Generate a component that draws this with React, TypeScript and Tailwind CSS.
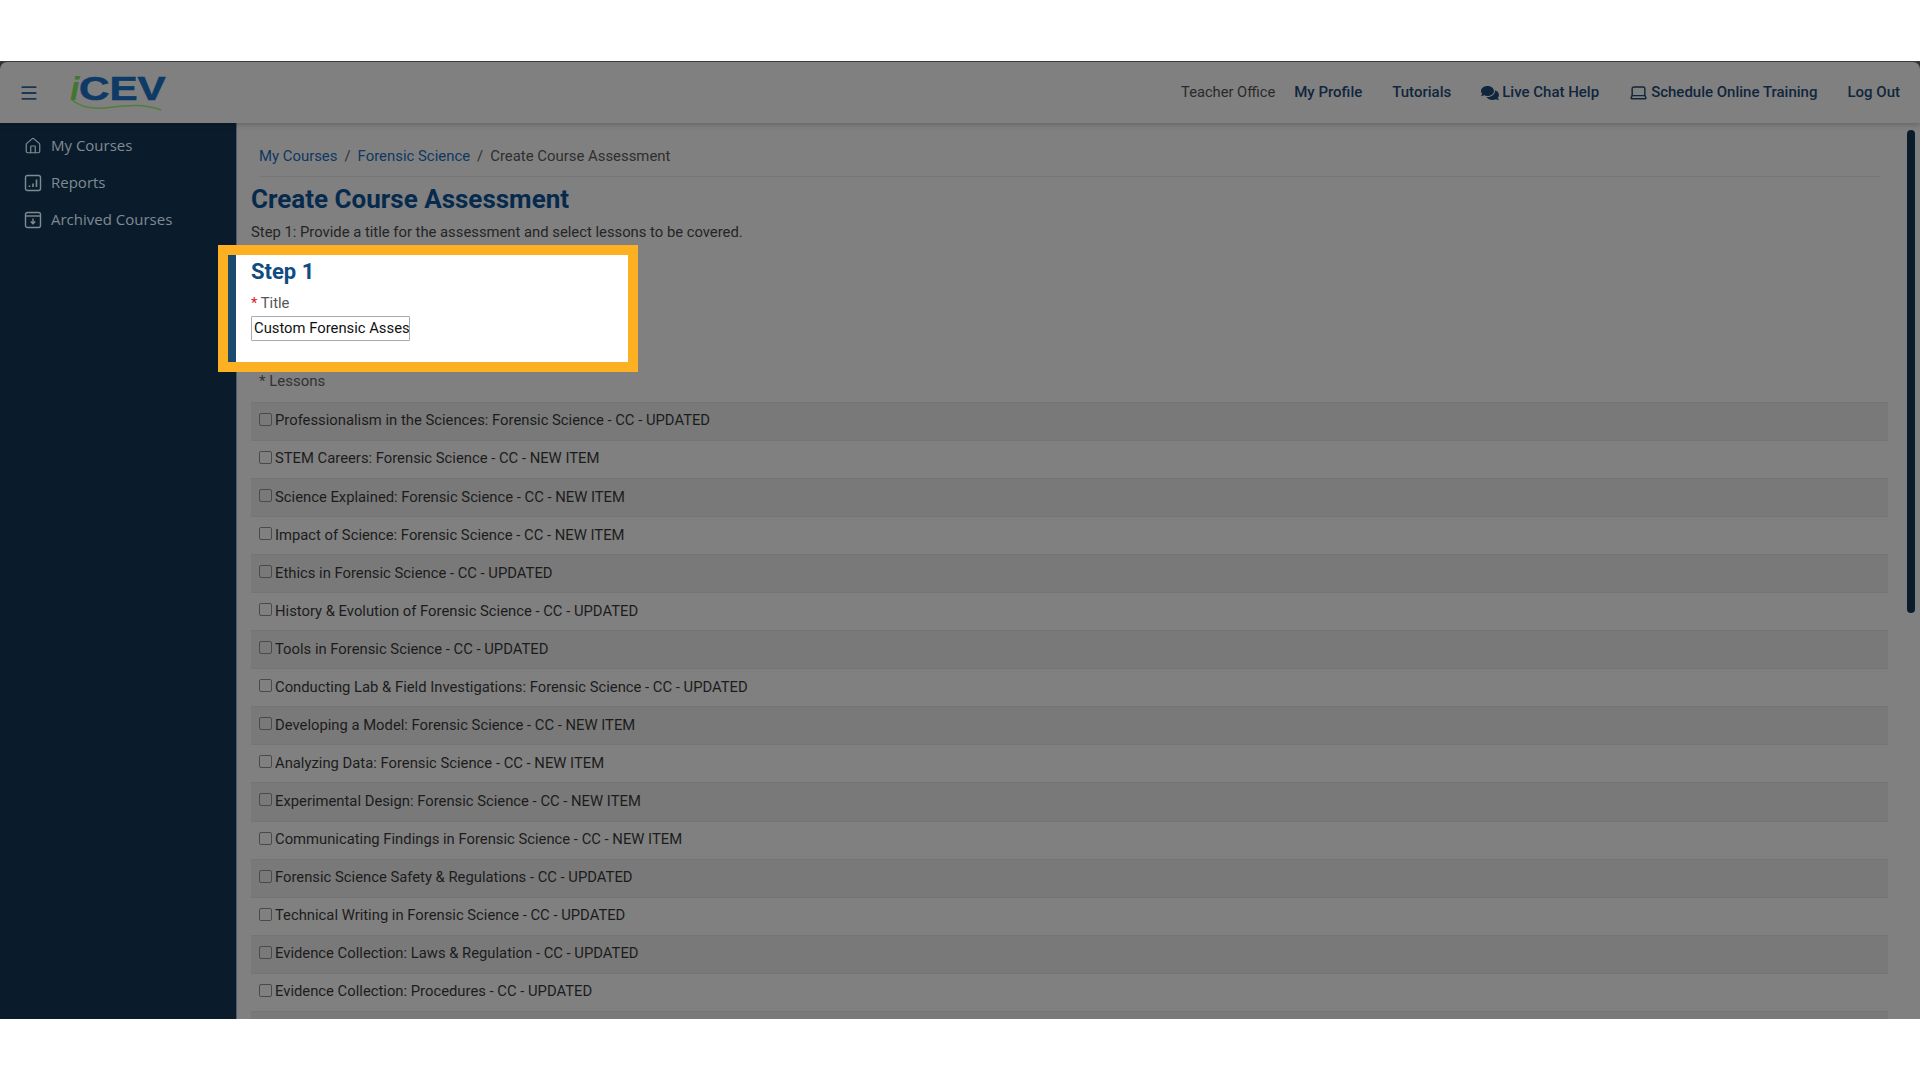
import { Home, Menu, Laptop } from "lucide-react";
import { FaComments } from "react-icons/fa";

const lessons = [
  "Professionalism in the Sciences: Forensic Science - CC - UPDATED",
  "STEM Careers: Forensic Science - CC - NEW ITEM",
  "Science Explained: Forensic Science - CC - NEW ITEM",
  "Impact of Science: Forensic Science - CC - NEW ITEM",
  "Ethics in Forensic Science - CC - UPDATED",
  "History & Evolution of Forensic Science - CC - UPDATED",
  "Tools in Forensic Science - CC - UPDATED",
  "Conducting Lab & Field Investigations: Forensic Science - CC - UPDATED",
  "Developing a Model: Forensic Science - CC - NEW ITEM",
  "Analyzing Data: Forensic Science - CC - NEW ITEM",
  "Experimental Design: Forensic Science - CC - NEW ITEM",
  "Communicating Findings in Forensic Science - CC - NEW ITEM",
  "Forensic Science Safety & Regulations - CC - UPDATED",
  "Technical Writing in Forensic Science - CC - UPDATED",
  "Evidence Collection: Laws & Regulation - CC - UPDATED",
  "Evidence Collection: Procedures - CC - UPDATED",
  "",
];

function ReportsIcon() {
  return (
    <svg width="18" height="18" viewBox="0 0 18 18" fill="none" stroke="currentColor" strokeWidth="1.4">
      <rect x="1.5" y="1.5" width="15" height="15" rx="2" />
      <path d="M5.5 13v-1.5M9 13V9.5M12.5 13V5.5" strokeWidth="1.6" />
    </svg>
  );
}

function ArchiveIcon() {
  return (
    <svg width="18" height="18" viewBox="0 0 18 18" fill="none" stroke="currentColor" strokeWidth="1.4">
      <rect x="1.5" y="1.5" width="15" height="15" rx="2" />
      <path d="M1.5 5h15" />
      <path d="M9 7.5v5M6.8 10.5 9 12.8l2.2-2.3" />
    </svg>
  );
}

function Logo() {
  return (
    <div className="relative h-[42px] w-[104px] shrink-0 font-['Liberation_Sans',sans-serif]">
      <span className="absolute left-[1px] top-[-5px] text-[34px] leading-[42px] font-bold italic text-[#44752f]">i</span>
      <span className="absolute left-[10px] top-[-5px] origin-left scale-x-[1.24] text-[34px] leading-[42px] font-bold text-[#0e3a66] [-webkit-text-stroke:0.6px_#0e3a66]">
        CEV
      </span>
      <svg className="absolute left-0 top-[26px]" width="104" height="16" viewBox="0 0 104 16" fill="none">
        <path d="M3 2C10 8 22 11 36 10C50 9 70 4 92 12" stroke="#4f7f3a" strokeWidth="1.5" />
      </svg>
    </div>
  );
}

function SideItem({ icon, label }: { icon: React.ReactNode; label: string }) {
  return (
    <div className="flex h-[37px] items-center gap-[9px] pl-[24px] text-[#808a93]">
      <span className="flex w-[18px] justify-center">{icon}</span>
      <span className="font-['Open_Sans',sans-serif] text-[15px] font-medium">{label}</span>
    </div>
  );
}

export default function App() {
  return (
    <div className="flex h-[1080px] w-full flex-col overflow-hidden bg-white pt-[61px]">
      <div className="flex h-[958px] flex-col overflow-hidden border-t border-[#3a3a3a] bg-[#333333] font-['Roboto',sans-serif]">
        <header className="relative z-20 flex h-[61px] shrink-0 items-center rounded-t-[7px] bg-[#808080] pl-[19px] pr-[20px] shadow-[0_2px_5px_rgba(0,0,0,0.2)]">
          <Menu size={20} className="text-[#1c3550]" strokeWidth={2.2} />
          <div className="ml-[30px]">
            <Logo />
          </div>
          <nav className="ml-auto flex items-center text-[15px] font-medium text-[#10263c]">
            <span className="text-[14.7px] font-normal text-[#2a2a2a]">Teacher Office</span>
            <span className="ml-[19px]">My Profile</span>
            <span className="ml-[30px]">Tutorials</span>
            <span className="ml-[30px] flex items-center gap-[3px]">
              <FaComments size={18} />
              Live Chat Help
            </span>
            <span className="ml-[30px] flex items-center gap-[3px]">
              <Laptop size={19} strokeWidth={1.8} />
              Schedule Online Training
            </span>
            <span className="ml-[30px]">Log Out</span>
          </nav>
        </header>

        <div className="flex min-h-0 flex-1 bg-[#808080]">
          <aside className="z-0 w-[237px] shrink-0 border-r border-[#4a5a68] bg-[#0a1c2b] pt-[4px]">
            <SideItem icon={<Home size={18} strokeWidth={1.6} />} label="My Courses" />
            <SideItem icon={<ReportsIcon />} label="Reports" />
            <SideItem icon={<ArchiveIcon />} label="Archived Courses" />
          </aside>

          <main className="relative min-w-0 flex-1 overflow-visible pl-[14px] pr-[32px]">
            <div className="ml-[8px] mr-[7px] flex h-[54px] items-center gap-[7px] border-b border-[#767676] pt-[14px] text-[14.9px]">
              <span className="text-[#0f3760]">My Courses</span>
              <span className="text-[#303030]">/</span>
              <span className="text-[#0f3760]">Forensic Science</span>
              <span className="text-[#303030]">/</span>
              <span className="text-[#2e2e2e]">Create Course Assessment</span>
            </div>
            <h1 className="mt-[7px] text-[26px] leading-[30px] font-bold text-[#062a4d]">Create Course Assessment</h1>
            <p className="mt-[8px] text-[14.8px] leading-[20px] text-[#252525]">
              Step 1: Provide a title for the assessment and select lessons to be covered.
            </p>

            <section className="relative z-10 mt-[3px] ml-[-33px] h-[127px] w-[420px] border-[10px] border-[#fdb022] bg-white pl-[15px]">
              <span className="absolute bottom-0 left-0 top-0 w-[8px] bg-[#1a4a6e]" />
              <div className="pl-[8px]">
                <h2 className="pt-[3px] text-[22px] leading-[28px] font-bold text-[#0f4c81]">Step 1</h2>
                <label className="mt-[7px] block text-[14.8px] leading-[20px] text-[#555]">
                  <span className="text-[#e0141c]">*</span> Title
                </label>
                <div className="mt-[3px] h-[25px] w-[159px] overflow-hidden whitespace-nowrap rounded-[1px] border border-[#aaa] bg-white pl-[2px] text-[14.8px] leading-[23px] text-[#111]">
                  Custom Forensic Asses
                </div>
              </div>
            </section>

            <div className="ml-[8px] mt-[-1px] h-[20px] text-[15px] leading-[20px] text-[#333]">* Lessons</div>
            <div className="mt-[11px]">
              {lessons.map((lesson, i) => (
                <div
                  key={i}
                  className={`flex h-[38.06px] items-center border-t border-[#757575] pl-[8px] text-[14.8px] text-[#1c1c1c] ${
                    i % 2 === 0 ? "bg-[#797979]" : "bg-[#808080]"
                  }`}
                >
                  {lesson && (
                    <>
                      <span className="mb-[4px] h-[13px] w-[13px] rounded-[2px] border border-[#4a4a4a]" />
                      <span className="mb-[2px] ml-[3px]">{lesson}</span>
                    </>
                  )}
                </div>
              ))}
            </div>

            <span className="absolute right-[5px] top-[7px] h-[483px] w-[8px] rounded-full bg-[#0a1c2b]" />
          </main>
        </div>
      </div>
    </div>
  );
}
